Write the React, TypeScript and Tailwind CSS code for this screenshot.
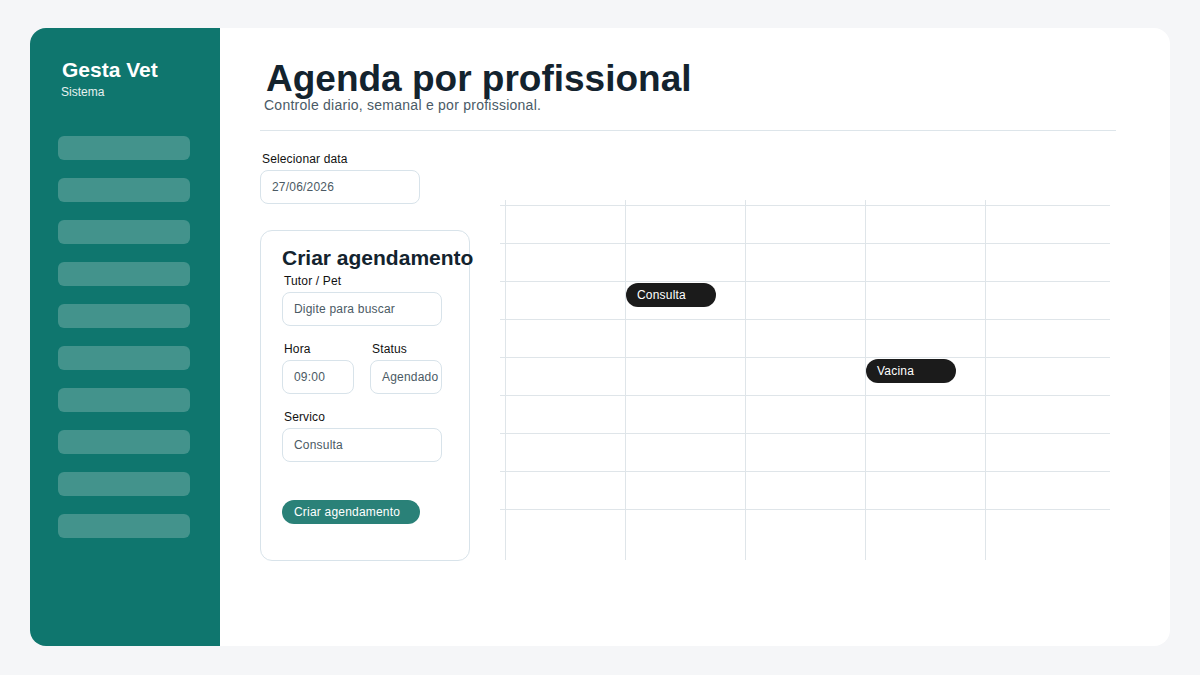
import { useState } from 'react';

const navPlaceholders = Array.from({ length: 10 }, (_, i) => i);

const hourRows = Array.from({ length: 9 }, (_, i) => i);
const dayCols = Array.from({ length: 5 }, (_, i) => i);

const events = [
    { id: 1, label: 'Consulta', left: 126, top: 83 },
    { id: 2, label: 'Vacina', left: 366, top: 159 },
];

const Field = ({ label, value, className }: { label: string; value: string; className?: string }) => (
    <div className={className}>
        <div className="text-[12px] leading-4 text-[#111] pl-[2px] tracking-[0.15px]">{label}</div>
        <div className="mt-[3px] h-[34px] rounded-lg border border-[#d8e3ea] bg-white pl-[11px] flex items-center text-[12px] text-[#4b5a64] tracking-[0.2px] overflow-hidden whitespace-nowrap">
            {value}
        </div>
    </div>
);

const Sidebar = () => (
    <aside className="w-[190px] shrink-0 h-full bg-[#0f766e] rounded-l-2xl px-7 pt-[28px]">
        <div className="ml-[4px] text-[21px] leading-7 font-bold text-white">Gesta Vet</div>
        <div className="ml-[3px] text-[12px] leading-4 text-white/90">Sistema</div>
        <nav className="mt-[36px] flex flex-col gap-[18px]">
            {navPlaceholders.map((i) => (
                <div key={i} className="h-6 w-[132px] rounded-md bg-[#43938c]" />
            ))}
        </nav>
    </aside>
);

const Schedule = () => (
    <div className="relative w-[610px] h-[360px]">
        {/* linhas de horario */}
        <div className="pt-[5px]">
            {hourRows.map((r) => (
                <div key={r} className="h-[38px] border-t border-[#dfe5e9]" />
            ))}
        </div>
        {/* colunas */}
        <div className="absolute inset-0 pl-[5px] flex">
            {dayCols.map((c) => (
                <div key={c} className="w-[120px] h-full border-l border-[#dfe5e9]" />
            ))}
        </div>
        {events.map((ev) => (
            <div
                key={ev.id}
                className="absolute h-6 w-[90px] rounded-full bg-[#1b1b1b] text-white text-[12px] pl-[11px] flex items-center tracking-[0.2px]"
                style={{ left: ev.left, top: ev.top }}
            >
                {ev.label}
            </div>
        ))}
    </div>
);

export default function App() {
    const [date] = useState('27/06/2026');

    return (
        <div
            className="min-h-screen bg-[#f5f6f8] px-[30px] pt-[28px]"
            style={{ fontFamily: '"Liberation Sans", Arial, sans-serif' }}
        >
            <div className="h-[618px] flex bg-white rounded-2xl">
                <Sidebar />
                <main className="flex-1 pl-10 pr-[54px] pt-[32px]">
                    <h1 className="ml-[6px] text-[37px] leading-none font-bold text-[#13232e]">Agenda por profissional</h1>
                    <p className="ml-[4px] -mt-[2px] text-[14px] leading-5 text-[#4a5a66] tracking-[0.25px]">Controle diario, semanal e por profissional.</p>
                    <div className="mt-[15px] border-t border-[#dde5ea]" />

                    <div className="flex mt-5">
                        <div className="w-[210px] shrink-0">
                            <div className="w-[160px]">
                                <Field label="Selecionar data" value={date} />
                            </div>

                            <section className="mt-[26px] h-[331px] rounded-xl border border-[#d8e3ea] pl-[21px] pt-[13px]">
                                <h2 className="text-[21px] leading-7 font-bold text-[#13232e] whitespace-nowrap">Criar agendamento</h2>
                                <Field className="mt-px w-[160px]" label="Tutor / Pet" value="Digite para buscar" />
                                <div className="mt-[15px] flex gap-4 w-[160px]">
                                    <Field className="w-[72px]" label="Hora" value="09:00" />
                                    <Field className="w-[72px]" label="Status" value="Agendado" />
                                </div>
                                <Field className="mt-[15px] w-[160px]" label="Servico" value="Consulta" />
                                <button className="mt-[38px] h-6 w-[138px] rounded-full bg-[#2a8178] text-white text-[12px] text-left pl-3 tracking-[0.2px]">
                                    Criar agendamento
                                </button>
                            </section>
                        </div>

                        <div className="ml-[30px] mt-[49px]">
                            <Schedule />
                        </div>
                    </div>
                </main>
            </div>
        </div>
    );
}
